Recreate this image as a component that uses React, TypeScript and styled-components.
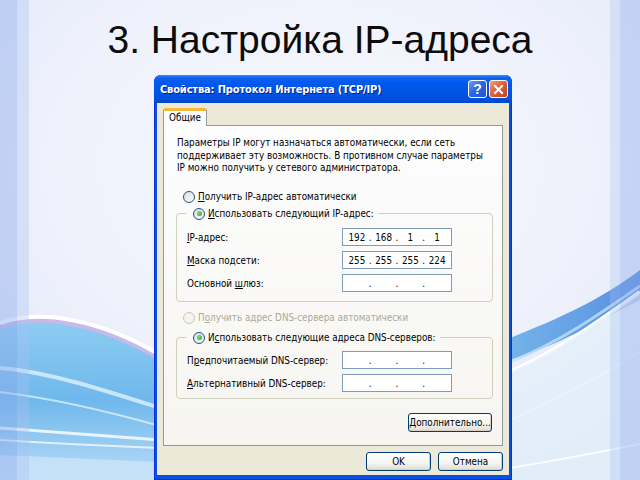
import React from 'react'
import styled, { createGlobalStyle, css } from 'styled-components'

const GlobalStyle = createGlobalStyle`
  html, body {
    margin: 0;
    padding: 0;
  }
  body {
    width: 640px;
    height: 480px;
    overflow: hidden;
  }
`

const uiFont = `"DejaVu Sans Condensed", "DejaVu Sans", "Liberation Sans", sans-serif`

const Slide = styled.div`
  position: relative;
  width: 640px;
  height: 480px;
  overflow: hidden;
  background: #eef1fa;
  display: flex;
  flex-direction: column;
`

const Backdrop = styled.svg`
  position: absolute;
  inset: 0;
  z-index: 0;
`

const Content = styled.div`
  position: relative;
  z-index: 1;
  display: flex;
  flex-direction: column;
  height: 100%;
`

const SlideTitle = styled.h1`
  margin: 0;
  height: 75px;
  box-sizing: border-box;
  padding-top: 20px;
  text-align: center;
  font-family: "Liberation Sans", Arial, sans-serif;
  font-weight: normal;
  font-size: 39px;
  line-height: 40px;
  color: #0c0c0c;
`

const Window = styled.div`
  margin-left: 154px;
  width: 358px;
  height: 405px;
  box-sizing: border-box;
  display: flex;
  flex-direction: column;
  padding: 0 3px 5px;
  border-radius: 7px 7px 0 0;
  background: #0a4fe0;
  box-shadow: inset 0 0 0 1px #0831d9;
  font-family: ${uiFont};
  font-size: 9.8px;
  color: #000;
`

const TitleBar = styled.div`
  height: 28px;
  margin: 0 -3px;
  padding: 0 4px 0 6px;
  display: flex;
  align-items: center;
  border-radius: 7px 7px 0 0;
  background: linear-gradient(
    #3a8cff 0%,
    #0b62f0 10%,
    #0058ee 30%,
    #0055e6 60%,
    #0050dc 85%,
    #0046cc 100%
  );
`

const Caption = styled.span`
  flex: 1;
  color: #fff;
  font-weight: bold;
  font-size: 11px;
  letter-spacing: -0.15px;
  text-shadow: 1px 1px 0 #0a1e8c;
`

const CaptionButtons = styled.div`
  display: flex;
  gap: 2px;
`

const CaptionButton = styled.div<{ $kind: 'help' | 'close' }>`
  width: 19px;
  height: 18px;
  box-sizing: border-box;
  border: 1px solid #fff;
  border-radius: 3px;
  display: flex;
  align-items: center;
  justify-content: center;
  color: #fff;
  font-family: "Liberation Sans", sans-serif;
  font-weight: bold;
  font-size: 14px;
  ${({ $kind }) =>
    $kind === 'help'
      ? css`
          background: linear-gradient(135deg, #6d9dfa 0%, #2e67e8 45%, #1f52d6 100%);
        `
      : css`
          background: linear-gradient(135deg, #f0a080 0%, #e2603a 45%, #c8421c 100%);
        `}
`

const Body = styled.div`
  flex: 1;
  display: flex;
  flex-direction: column;
  padding: 5px 6px 0 6px;
  background: #ece9d8;
`

const TabStrip = styled.div`
  display: flex;
  height: 17px;
`

const Tab = styled.div`
  position: relative;
  z-index: 1;
  width: 44px;
  height: 18px;
  box-sizing: border-box;
  border: 1px solid #919b9c;
  border-bottom: none;
  border-top: 3px solid #f5b73a;
  border-radius: 3px 3px 0 0;
  background: #fcfcfe;
  text-align: center;
  line-height: 14px;
`

const Panel = styled.div`
  height: 321px;
  box-sizing: border-box;
  width: 340px;
  border: 1px solid #919b9c;
  background: linear-gradient(#fdfdfe, #f6f5f0);
  padding: 11px 9px 0 12px;
  display: flex;
  flex-direction: column;
`

const Intro = styled.p`
  margin: 0 0 0 1px;
  line-height: 12.5px;
`

const Spacer = styled.div<{ $h: number }>`
  height: ${({ $h }) => $h}px;
  flex: none;
`

const RadioRow = styled.div<{ $disabled?: boolean }>`
  display: flex;
  align-items: center;
  gap: 3px;
  height: 14px;
  margin-left: 7px;
  color: ${({ $disabled }) => ($disabled ? '#aca899' : '#000')};
`

const RadioMark = styled.span<{ $checked?: boolean; $disabled?: boolean }>`
  width: 12px;
  height: 12px;
  box-sizing: border-box;
  border-radius: 50%;
  border: 1px solid ${({ $disabled }) => ($disabled ? '#cac8bb' : '#1c5180')};
  background: ${({ $disabled }) =>
    $disabled ? '#f5f4ea' : 'linear-gradient(135deg, #dcdcd7, #ffffff)'};
  display: flex;
  align-items: center;
  justify-content: center;
  &::after {
    content: '';
    display: ${({ $checked }) => ($checked ? 'block' : 'none')};
    width: 5px;
    height: 5px;
    border-radius: 50%;
    background: radial-gradient(circle at 35% 35%, #7be07a, #21a121);
  }
`

const Group = styled.fieldset<{ $padTop: number; $padBottom: number }>`
  margin: 0;
  padding: ${({ $padTop, $padBottom }) => `${$padTop}px 40px ${$padBottom}px 10px`};
  border: 1px solid #d0d0bf;
  border-radius: 4px;
  min-width: 0;
`

const GroupLegend = styled.legend`
  padding: 0 4px 0 0;
  margin-left: -1px;
`

const FieldRow = styled.div`
  display: flex;
  align-items: center;
  justify-content: space-between;
  height: 23px;
`

const IpBox = styled.div`
  width: 110px;
  height: 18px;
  box-sizing: border-box;
  border: 1px solid #7f9db9;
  background: #fff;
  display: flex;
  align-items: center;
  padding: 0 2px;
`

const IpPart = styled.span`
  flex: 1;
  text-align: center;
`

const IpDot = styled.span`
  width: 3px;
  text-align: center;
`

const PanelFooter = styled.div`
  margin-top: auto;
  margin-bottom: 13px;
  display: flex;
  justify-content: flex-end;
  padding-right: 1px;
`

const Button = styled.button<{ $width: number }>`
  width: ${({ $width }) => $width}px;
  height: 19px;
  box-sizing: border-box;
  padding: 0;
  border: 1px solid #003c74;
  border-radius: 3px;
  background: linear-gradient(#ffffff 0%, #f4f4f0 60%, #dedcd2 100%);
  box-shadow: inset -1px -1px 0 #d6d0c5;
  font-family: ${uiFont};
  font-size: 9.8px;
  color: #000;
`

const DialogButtons = styled.div`
  display: flex;
  justify-content: flex-end;
  gap: 7px;
  width: 340px;
  margin-top: 6px;
`

const Key = styled.span`
  text-decoration: underline;
`

const Radio = ({
  checked,
  disabled,
  children
}: {
  checked?: boolean
  disabled?: boolean
  children: React.ReactNode
}) => (
  <RadioRow $disabled={disabled}>
    <RadioMark $checked={checked} $disabled={disabled} />
    <span>{children}</span>
  </RadioRow>
)

const IpField = ({ parts = [] }: { parts?: string[] }) => (
  <IpBox>
    {[0, 1, 2, 3].map((i) => (
      <React.Fragment key={i}>
        {i > 0 && <IpDot>.</IpDot>}
        <IpPart>{parts[i] ?? ''}</IpPart>
      </React.Fragment>
    ))}
  </IpBox>
)

const CloseGlyph = () => (
  <svg width='11' height='11' viewBox='0 0 11 11'>
    <path d='M2 2 L9 9 M9 2 L2 9' stroke='#fff' strokeWidth='2' strokeLinecap='square' />
  </svg>
)

const SlideBackdrop = () => (
  <Backdrop width='640' height='480' viewBox='0 0 640 480'>
    <defs>
      <radialGradient id='sky' cx='0.5' cy='0.35' r='0.75'>
        <stop offset='0' stopColor='#f8f9fe' />
        <stop offset='0.6' stopColor='#eef1fb' />
        <stop offset='1' stopColor='#dfe6f7' />
      </radialGradient>
      <linearGradient id='sea' x1='0' y1='0' x2='0' y2='1'>
        <stop offset='0' stopColor='#8ecdf2' />
        <stop offset='0.5' stopColor='#6fb8ec' />
        <stop offset='1' stopColor='#b9dcf6' />
      </linearGradient>
      <linearGradient id='seaRight' x1='0' y1='0' x2='1' y2='0'>
        <stop offset='0' stopColor='#5fa8e6' />
        <stop offset='1' stopColor='#3f7fdc' />
      </linearGradient>
    </defs>
    <rect width='640' height='480' fill='url(#sky)' />

    {/* left wave */}
    <path d='M0 326 C40 312 100 322 160 358 L160 480 L0 480 Z' fill='url(#sea)' />
    <path d='M0 326 C40 312 100 322 160 358' stroke='#c7b9ea' strokeWidth='6' fill='none' />
    <path d='M0 323 C40 309 100 319 160 355' stroke='#ffffff' strokeWidth='4' fill='none' />
    <path d='M0 368 C50 372 110 392 160 408' stroke='#dff1fc' strokeWidth='4' fill='none' opacity='0.8' />
    <path d='M0 392 C50 398 110 412 160 426' stroke='#ffffff' strokeWidth='2' fill='none' opacity='0.6' />
    <path d='M0 428 C60 432 110 436 160 440' stroke='#ffffff' strokeWidth='3' fill='none' opacity='0.8' />
    <path d='M0 440 C60 444 110 446 160 448' stroke='#ffffff' strokeWidth='2' fill='none' opacity='0.7' />
    <path d='M0 455 L160 462 L160 480 L0 480 Z' fill='#c9e3f7' opacity='0.8' />

    {/* right wave */}
    <path d='M510 338 C560 318 600 300 640 270 L640 300 C600 320 560 345 510 360 Z' fill='url(#seaRight)' opacity='0.85' />
    <path d='M510 372 C560 350 600 320 640 292' stroke='#ffffff' strokeWidth='4' fill='none' />
    <path d='M510 362 C560 342 600 314 640 286' stroke='#bfe0f8' strokeWidth='3' fill='none' opacity='0.8' />
    <path d='M510 420 C560 398 600 376 640 352' stroke='#ffffff' strokeWidth='2' fill='none' opacity='0.8' />
    <path d='M510 372 C560 350 600 320 640 292 L640 480 L510 480 Z' fill='#e3effb' opacity='0.7' />
    <path d='M510 468 C560 460 600 452 640 444' stroke='#ffffff' strokeWidth='2' fill='none' opacity='0.8' />

    {/* translucent side bands */}
    <rect x='0' y='0' width='17' height='480' fill='#8eabec' opacity='0.45' />
    <rect x='17' y='0' width='12' height='480' fill='#a9bff0' opacity='0.35' />
    <rect x='610' y='0' width='10' height='480' fill='#a9bff0' opacity='0.3' />
    <rect x='620' y='0' width='20' height='480' fill='#8eabec' opacity='0.4' />
  </Backdrop>
)

export default function App() {
  return (
    <>
      <GlobalStyle />
      <Slide>
        <SlideBackdrop />
        <Content>
          <SlideTitle>3. Настройка IP-адреса</SlideTitle>
          <Window>
            <TitleBar>
              <Caption>Свойства: Протокол Интернета (TCP/IP)</Caption>
              <CaptionButtons>
                <CaptionButton $kind='help'>?</CaptionButton>
                <CaptionButton $kind='close'>
                  <CloseGlyph />
                </CaptionButton>
              </CaptionButtons>
            </TitleBar>
            <Body>
              <TabStrip>
                <Tab>Общие</Tab>
              </TabStrip>
              <Panel>
                <Intro>
                  Параметры IP могут назначаться автоматически, если сеть
                  <br />
                  поддерживает эту возможность. В противном случае параметры
                  <br />
                  IP можно получить у сетевого администратора.
                </Intro>

                <Spacer $h={15} />
                <Radio>
                  <Key>П</Key>олучить IP-адрес автоматически
                </Radio>
                <Spacer $h={3} />
                <Group $padTop={5} $padBottom={6}>
                  <GroupLegend>
                    <Radio checked>
                      <Key>И</Key>спользовать следующий IP-адрес:
                    </Radio>
                  </GroupLegend>
                  <FieldRow>
                    <span>
                      <Key>I</Key>P-адрес:
                    </span>
                    <IpField parts={['192', '168', '1', '1']} />
                  </FieldRow>
                  <FieldRow>
                    <span>
                      <Key>М</Key>аска подсети:
                    </span>
                    <IpField parts={['255', '255', '255', '224']} />
                  </FieldRow>
                  <FieldRow>
                    <span>
                      Основной <Key>ш</Key>люз:
                    </span>
                    <IpField />
                  </FieldRow>
                </Group>

                <Spacer $h={9} />
                <Radio disabled>
                  П<Key>о</Key>лучить адрес DNS-сервера автоматически
                </Radio>
                <Spacer $h={6} />
                <Group $padTop={4} $padBottom={3}>
                  <GroupLegend>
                    <Radio checked>
                      И<Key>с</Key>пользовать следующие адреса DNS-серверов:
                    </Radio>
                  </GroupLegend>
                  <FieldRow>
                    <span>
                      П<Key>р</Key>едпочитаемый DNS-сервер:
                    </span>
                    <IpField />
                  </FieldRow>
                  <FieldRow>
                    <span>
                      <Key>А</Key>льтернативный DNS-сервер:
                    </span>
                    <IpField />
                  </FieldRow>
                </Group>

                <PanelFooter>
                  <Button $width={84}>
                    <Key>Д</Key>ополнительно...
                  </Button>
                </PanelFooter>
              </Panel>
              <DialogButtons>
                <Button $width={65}>OK</Button>
                <Button $width={65}>Отмена</Button>
              </DialogButtons>
            </Body>
          </Window>
        </Content>
      </Slide>
    </>
  )
}
